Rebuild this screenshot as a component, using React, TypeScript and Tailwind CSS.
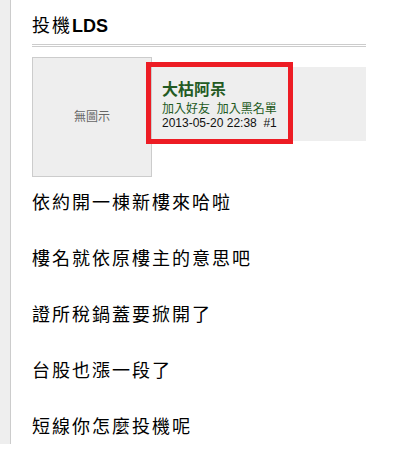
import React from "react";

const LINES = [
  "依約開一棟新樓來哈啦",
  "樓名就依原樓主的意思吧",
  "證所稅鍋蓋要掀開了",
  "台股也漲一段了",
  "短線你怎麼投機呢",
];

const FONT = "font-['Liberation_Sans','Noto_Sans_CJK_TC',sans-serif]";

export default function App() {
  return (
    <div className={`bg-white w-[415px] h-[472px] ${FONT}`}>
      <div className="flex">
        {/* left rail */}
        <div className="w-[11px] bg-[#eeeeee] border-r border-[#cccccc]" />

        <div className="w-[355px] pl-[21px] pb-[5px]">
          {/* thread title */}
          <h2 className="pt-[14px] pb-[6px] text-[18px] leading-6 text-black border-b-[3px] border-double border-[#cccccc]">
            <span className="font-normal tracking-[2px]">投機</span>
            <span className="font-bold">LDS</span>
          </h2>

          {/* post header */}
          <div className="flex mt-[10px]">
            <div className="w-[120px] h-[120px] shrink-0 bg-[#eeeeee] border border-[#cccccc] flex items-center justify-center text-[12px] text-[#666666]">
              無圖示
            </div>
            <div className="relative flex-1 mt-[10px] h-[74px] bg-[#eeeeee] pl-[10px] pt-[13px]">
              <p className="text-[16px] leading-[20px] font-bold text-[#235a23]">大枯阿呆</p>
              <p className="mt-[2px] text-[12px] leading-[14px] text-[#235a23]">加入好友&nbsp;&nbsp;加入黑名單</p>
              <p className="text-[12px] leading-[14px] text-[#111111]">2013-05-20 22:38&nbsp;&nbsp;#1</p>
              {/* highlight annotation */}
              <div className="absolute left-[-6px] top-[-5px] w-[147px] h-[82px] border-[5px] border-[#ed1c24]" />
            </div>
          </div>

          {/* post body */}
          <div className="mt-[14px] flex flex-col gap-[32px] text-[18px] leading-6 tracking-[2px] text-black">
            {LINES.map((l) => (
              <p key={l}>{l}</p>
            ))}
          </div>
        </div>
      </div>
    </div>
  );
}
